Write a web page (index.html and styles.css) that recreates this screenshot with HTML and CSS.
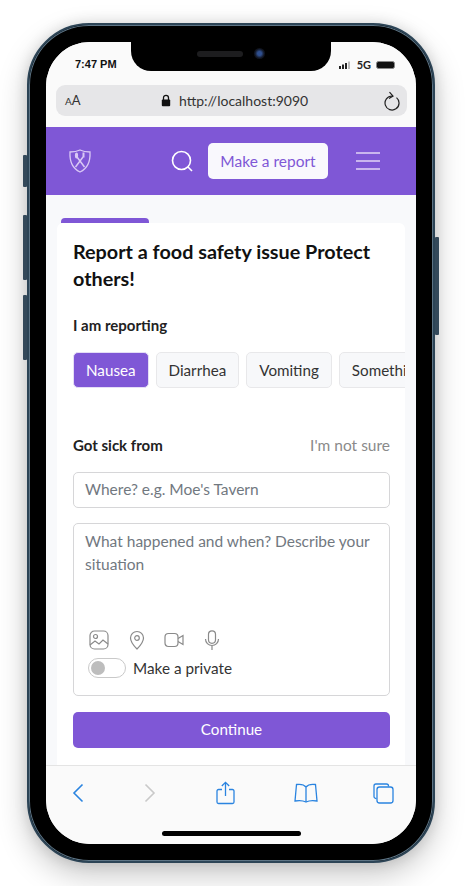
FILE: index.html
```html
<!DOCTYPE html>
<html lang="en">
<head>
  <meta charset="UTF-8">
  <title>Make a report</title>
  <link rel="stylesheet" href="styles.css">
</head>
<body>
  <div class="phone">
    <span class="side-btn side-mute"></span>
    <span class="side-btn side-up"></span>
    <span class="side-btn side-down"></span>
    <span class="side-btn side-power"></span>
    <div class="screen">
      <div class="notch">
        <span class="speaker"></span>
        <span class="camera"></span>
      </div>

      <div class="status">
        <span class="time">7:47 PM</span>
        <div class="status-right">
          <svg class="signal" width="13" height="9" viewBox="0 0 13 9">
            <rect x="0" y="5" width="2" height="3" fill="#222"/>
            <rect x="3" y="3.500" width="2" height="4.500" fill="#222"/>
            <rect x="6" y="2" width="2" height="6" fill="#222"/>
            <rect x="9" y="0.500" width="2" height="7.500" fill="#bbb"/>
          </svg>
          <span class="net">5G</span>
          <span class="battery"></span>
        </div>
      </div>

      <div class="urlbar">
        <span class="aa"><small>A</small>A</span>
        <div class="url">
          <svg width="10" height="13" viewBox="0 0 10 13">
            <path d="M2.500 6V3.800a2.500 2.500 0 0 1 5 0V6" fill="none" stroke="#111" stroke-width="1.300"/>
            <rect x="0.800" y="5.500" width="8.400" height="6.800" rx="1" fill="#111"/>
          </svg>
          <span>http://localhost:9090</span>
        </div>
        <svg class="reload" width="18" height="20" viewBox="0 0 18 20" fill="none" stroke="#222" stroke-width="1.200">
          <path d="M13.500 6.600A7 7 0 1 1 9 5"/>
          <path d="M6.500 1.200L10 5 6 7.500"/>
        </svg>
      </div>

      <header class="topbar">
        <svg class="logo" width="24" height="26" viewBox="0 0 24 26" fill="none" stroke="#d9c8f5" stroke-width="1.300">
          <path d="M12 2c3 1.500 6 2 10 2 .5 9-1.500 16-10 20C3.500 20 1.500 13 2 4c4 0 7-.5 10-2z"/>
          <path d="M7.500 19L15 9M16.500 19L9 9" stroke-width="1.500"/>
          <ellipse cx="8.500" cy="7.500" rx="1.600" ry="3" fill="#d9c8f5" stroke="none"/>
          <path d="M15.500 4.500v5" stroke-width="2"/>
        </svg>
        <svg class="search" width="23" height="23" viewBox="0 0 23 23" fill="none" stroke="#fff" stroke-width="1.600">
          <circle cx="10.500" cy="10.500" r="9"/>
          <path d="M17 17l4 4"/>
        </svg>
        <a class="report-btn">Make a report</a>
        <div class="burger"><span></span><span></span><span></span></div>
      </header>

      <main class="content">
        <div class="tab-mark"></div>
        <section class="card">
          <h1>Report a food safety issue Protect others!</h1>
          <p class="label">I am reporting</p>
          <div class="chips">
            <span class="chip chip-on">Nausea</span>
            <span class="chip">Diarrhea</span>
            <span class="chip">Vomiting</span>
            <span class="chip">Something else</span>
          </div>

          <div class="sick-row">
            <span class="label-sm">Got sick from</span>
            <span class="unsure">I'm not sure</span>
          </div>
          <div class="field">Where? e.g. Moe's Tavern</div>
          <div class="textbox">
            <p class="placeholder">What happened and when? Describe your situation</p>
            <div class="attach">
              <svg width="22" height="20" viewBox="0 0 22 20" fill="none" stroke="#8a8a8a" stroke-width="1.200">
                <rect x="2" y="1" width="18" height="18" rx="4.500"/>
                <circle cx="7.500" cy="6.500" r="2"/>
                <path d="M2 15l5-4 4 3 4-4 5 4"/>
              </svg>
              <svg width="16" height="20" viewBox="0 0 16 20" fill="none" stroke="#8a8a8a" stroke-width="1.200">
                <path d="M8 19C4 15 1.500 11.500 1.500 8a6.500 6.500 0 0 1 13 0c0 3.500-2.500 7-6.500 11z"/>
                <circle cx="8" cy="8" r="2.300"/>
              </svg>
              <svg width="21" height="20" viewBox="0 0 21 20" fill="none" stroke="#8a8a8a" stroke-width="1.200">
                <rect x="1" y="3.500" width="13" height="13" rx="3.500"/>
                <path d="M14 8.500l5-3v9l-5-3"/>
              </svg>
              <svg width="16" height="20" viewBox="0 0 16 20" fill="none" stroke="#8a8a8a" stroke-width="1.200">
                <rect x="4.500" y="0.800" width="7" height="12.500" rx="3.500"/>
                <path d="M1.500 9a6.500 6.500 0 0 0 13 0M8 15.500V20"/>
              </svg>
            </div>
            <div class="private">
              <span class="toggle"><span class="knob"></span></span>
              <span>Make a private</span>
            </div>
          </div>
          <button class="continue">Continue</button>
        </section>
      </main>

      <footer class="toolbar">
        <svg width="12" height="20" viewBox="0 0 12 20" fill="none" stroke="#2a84e0" stroke-width="1.600"><path d="M10.500 1.500L2 10l8.500 8.500"/></svg>
        <svg width="12" height="20" viewBox="0 0 12 20" fill="none" stroke="#c9c9c9" stroke-width="1.600"><path d="M1.500 1.500L10 10l-8.500 8.500"/></svg>
        <svg width="19" height="24" viewBox="0 0 19 24" fill="none" stroke="#2a84e0" stroke-width="1.300">
          <path d="M6 8.500H2.500a1.500 1.500 0 0 0-1.500 1.500v11a1.500 1.500 0 0 0 1.500 1.500h14a1.500 1.500 0 0 0 1.500-1.500V10a1.500 1.500 0 0 0-1.500-1.500H13"/>
          <path d="M9.500 15V1.500M5.800 5L9.500 1.300 13.200 5"/>
        </svg>
        <svg width="24" height="20" viewBox="0 0 24 20" fill="none" stroke="#2a84e0" stroke-width="1.300">
          <path d="M12 4C10 1.500 6 1 2.500 1.500L1 18c4-.8 8-.5 11 1 3-1.500 7-1.800 11-1L21.500 1.500C18 1 14 1.500 12 4zM12 4v15"/>
        </svg>
        <svg width="21" height="21" viewBox="0 0 21 21" fill="none" stroke="#2a84e0" stroke-width="1.300">
          <path d="M3.500 15.500H3a2 2 0 0 1-2-2V3a2 2 0 0 1 2-2h10.500a2 2 0 0 1 2 2v.5"/>
          <rect x="4" y="4" width="16" height="16" rx="2.500"/>
        </svg>
      </footer>
      <div class="home-wrap"><span class="home-bar"></span></div>
    </div>
  </div>
</body>
</html>
```
FILE: styles.css
```css
* {
  box-sizing: border-box;
}
body {
  margin: 0;
  width: 465px;
  height: 886px;
  overflow: hidden;
  background: #fff;
  font-family: Lato, "Open Sans", sans-serif;
  padding: 23px 0 0 27px;
}
.phone {
  position: relative;
  width: 408px;
  height: 840px;
  padding: 17px;
  background: #000;
  border: 2px solid #2c4456;
  border-radius: 62px;
  box-shadow: 0 0 0 1px #5d7485 inset, 0 12px 30px rgba(0, 0, 0, .22), 0 0 14px rgba(0, 0, 0, .12);
}
.side-btn {
  position: absolute;
  width: 4px;
  background: #34495a;
  border-radius: 1px;
}
.side-mute {
  left: -6px;
  top: 130px;
  height: 32px;
}
.side-up {
  left: -6px;
  top: 190px;
  height: 65px;
}
.side-down {
  left: -6px;
  top: 270px;
  height: 65px;
}
.side-power {
  right: -6px;
  top: 212px;
  height: 98px;
}
.screen {
  position: relative;
  width: 370px;
  height: 802px;
  background: #fafafa;
  border-radius: 44px;
  overflow: hidden;
  display: flex;
  flex-direction: column;
}
.notch {
  position: absolute;
  left: 85px;
  top: 0;
  width: 200px;
  height: 29px;
  background: #000;
  border-radius: 0 0 20px 20px;
  display: flex;
  align-items: center;
  justify-content: center;
  gap: 11px;
  padding: 0 0 6px 0;
}
.speaker {
  width: 46px;
  height: 6px;
  border-radius: 3px;
  background: #1d1d1f;
}
.camera {
  width: 11px;
  height: 11px;
  border-radius: 50%;
  background: radial-gradient(circle, #2f4f8f 0 25%, #10141f 60%);
}
.status {
  height: 43px;
  flex: none;
  padding: 15px 21px 0 29px;
  display: flex;
  justify-content: space-between;
  align-items: flex-start;
  background: #fafafa;
}
.time {
  font-family: "Liberation Sans", sans-serif;
  font-size: 11px;
  font-weight: bold;
  color: #111;
  line-height: 14px;
}
.status-right {
  display: flex;
  align-items: center;
  gap: 5px;
  padding-top: 1px;
}
.net {
  font-size: 11px;
  font-weight: 700;
  color: #222;
  line-height: 14px;
}
.battery {
  width: 19px;
  height: 8px;
  background: #111;
  border: 1px solid #888;
  border-radius: 2.500px;
}
.urlbar {
  flex: none;
  height: 31px;
  margin: 0 9px 0 10px;
  border-radius: 9px;
  background: #e6e6e8;
  display: flex;
  align-items: center;
  padding: 0 6px 0 9px;
}
.aa {
  font-size: 13px;
  color: #333;
  width: 96px;
  line-height: 1;
}
.aa small {
  font-size: 10px;
}
.url {
  display: flex;
  align-items: center;
  gap: 8px;
  font-size: 14px;
  color: #333;
  flex: 1;
}
.topbar {
  flex: none;
  height: 68px;
  margin-top: 11px;
  background: #7f57d6;
  display: flex;
  align-items: center;
  padding: 0 0 0 22px;
}
.search {
  margin-left: 79px;
}
.report-btn {
  margin-left: 14px;
  width: 120px;
  height: 36px;
  background: #f9f8fd;
  border-radius: 5px;
  color: #7f57d6;
  font-size: 15.500px;
  display: flex;
  align-items: center;
  justify-content: center;
}
.burger {
  margin-left: 28px;
  width: 24px;
  display: flex;
  flex-direction: column;
  gap: 6px;
}
.burger span {
  height: 2px;
  background: #c9b5ee;
}
.content {
  flex: 1;
  min-height: 0;
  background: #f8f9fb;
  padding: 23px 11px 0 11px;
}
.tab-mark {
  width: 88px;
  height: 5px;
  margin-left: 4px;
  background: #7f57d6;
  border-radius: 4px 4px 0 0;
}
.card {
  background: #fff;
  height: 542px;
  border-radius: 6px 6px 0 0;
  padding: 15px 15px 0 16px;
  overflow: hidden;
}
h1 {
  margin: 0;
  font-size: 19.800px;
  font-weight: 700;
  line-height: 27px;
  color: #111;
}
.label {
  margin: 23px 0 0;
  font-size: 15px;
  font-weight: 700;
  line-height: 20px;
  color: #222;
}
.chips {
  margin-top: 17px;
  margin-right: -15px;
  display: flex;
  gap: 7px;
  overflow: hidden;
}
.chip {
  flex: none;
  height: 36px;
  padding: 0 12px;
  display: flex;
  align-items: center;
  background: #f7f8fa;
  border: 1px solid #e8e8ea;
  border-radius: 5px;
  font-size: 15.200px;
  color: #333;
}
.chip-on {
  background: #7f57d6;
  border-color: #e5def6;
  color: #fff;
}
.sick-row {
  margin-top: 47px;
  display: flex;
  justify-content: space-between;
  align-items: center;
  line-height: 20px;
}
.label-sm {
  font-size: 15px;
  font-weight: 700;
  color: #222;
}
.unsure {
  font-size: 15.500px;
  color: #8a8a8a;
}
.field {
  margin-top: 17px;
  height: 36px;
  border: 1px solid #d6d6d8;
  border-radius: 5px;
  padding: 0 12px 2px 11px;
  display: flex;
  align-items: center;
  font-size: 15.500px;
  color: #71787f;
}
.textbox {
  margin-top: 15px;
  height: 173px;
  border: 1px solid #d6d6d8;
  border-radius: 5px;
  padding: 6px 11px 0;
}
.placeholder {
  margin: 0;
  font-size: 15.500px;
  line-height: 23px;
  color: #71787f;
  height: 100px;
}
.attach {
  display: flex;
  align-items: center;
  gap: 19px;
  margin-left: 3px;
}
.private {
  margin-top: 8px;
  margin-left: 3px;
  display: flex;
  align-items: center;
  gap: 7px;
  font-size: 15.300px;
  color: #333;
  line-height: 20px;
}
.toggle {
  width: 38px;
  height: 20px;
  border: 1px solid #c9c9c9;
  border-radius: 10px;
  padding: 2px;
  display: block;
}
.knob {
  display: block;
  width: 14px;
  height: 14px;
  border-radius: 50%;
  background: #bdbdbd;
}
.continue {
  display: block;
  width: 100%;
  height: 36px;
  margin-top: 16px;
  padding-bottom: 3px;
  background: #7f57d6;
  border: 0;
  border-radius: 5px;
  color: #fff;
  font-family: inherit;
  font-size: 15.200px;
}
.toolbar {
  flex: none;
  height: 55px;
  background: #fafafa;
  border-top: 1px solid #e4e4e4;
  display: grid;
  grid-template-columns: 72px 72px 78px 79px auto;
  align-items: center;
  padding: 0 0 0 26px;
}
.home-wrap {
  flex: none;
  height: 24px;
  background: #fafafa;
  display: flex;
  justify-content: center;
  padding-top: 11px;
}
.home-bar {
  width: 139px;
  height: 5px;
  border-radius: 3px;
  background: #000;
}
```
